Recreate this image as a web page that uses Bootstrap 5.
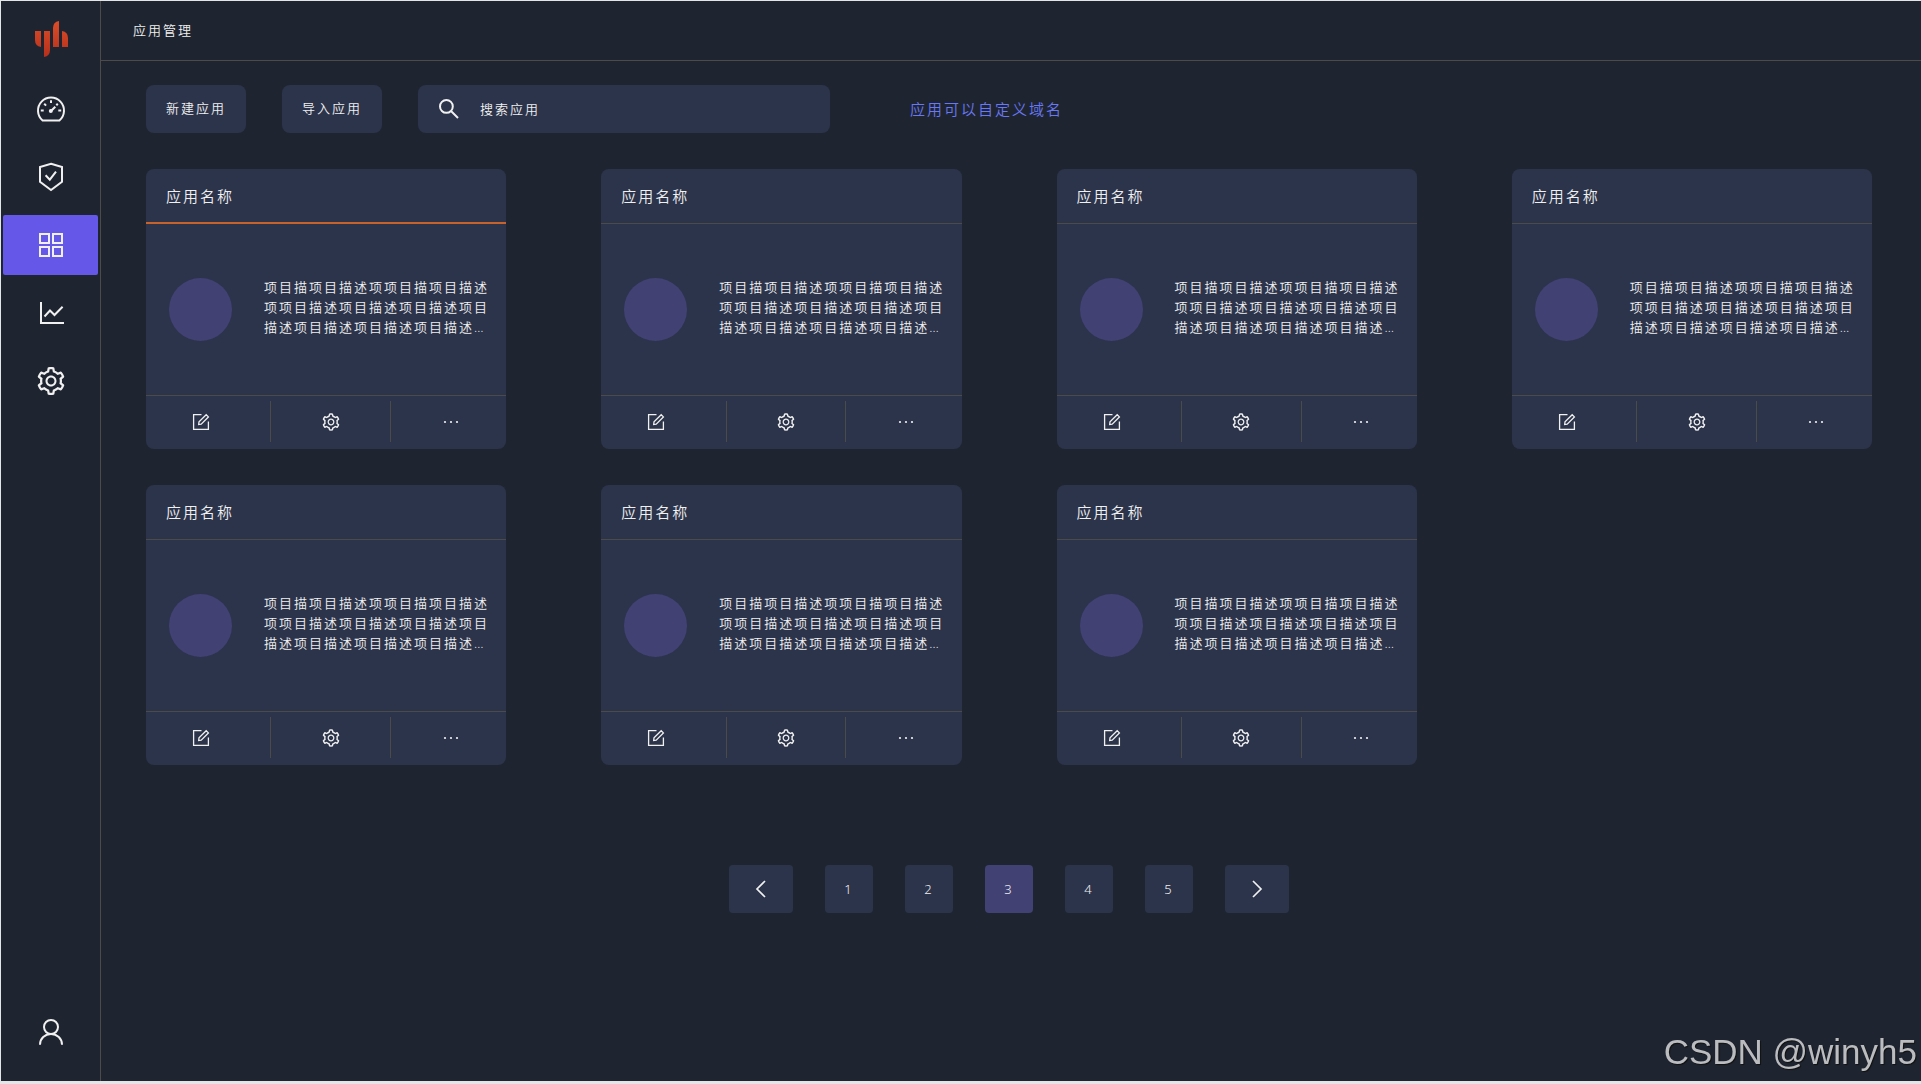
<!DOCTYPE html>
<html lang="zh-CN">
<head>
<meta charset="utf-8">
<meta name="viewport" content="width=device-width, initial-scale=1">
<title>应用管理</title>
<link href="https://cdn.jsdelivr.net/npm/bootstrap@5.3.0/dist/css/bootstrap.min.css" rel="stylesheet">
<style>
:root { --ink: #1f2530; --panel: #2c344b; --line: #4c4b4a; --violet: #6558e8; --plum: #414174; --snow: #f0f0f0; --weight: 350; }
body { background: var(--ink); color: var(--snow); font-family: "Noto Sans", "Noto Sans CJK SC", sans-serif; font-size: 13px; font-weight: var(--weight); line-height: 20px; letter-spacing: 2px; }
.shell { min-height: 100vh; border: solid #e3e5e6; border-width: 1px 0 3px 1px; }
.side { flex: 0 0 100px; border-right: 1px solid var(--line); padding: 20px 2px 19px; }
.side-nav { gap: 8px; margin-top: 22px; }
.side-link { height: 60px; border-radius: 2px; color: var(--snow); }
.side-link.active { background: var(--violet); }
.stroked { fill: none; stroke: currentColor; stroke-width: 2; }
.topbar { height: 60px; border-bottom: 1px solid var(--line); padding: 0 32px 2px; }
.topbar h1 { font-size: 13px; line-height: 20px; font-weight: var(--weight); }
.work { padding: 24px 49px 48px 45px; }
.tools { gap: 36px; margin-bottom: 36px; }
.tool-btn { --bs-btn-color: var(--snow); --bs-btn-bg: var(--panel); --bs-btn-hover-color: #fff; --bs-btn-hover-bg: var(--plum); --bs-btn-font-weight: var(--weight); height: 48px; padding: 0 20px; border: 0; border-radius: 8px; font-size: 13px; letter-spacing: 2px; }
.finder { flex: 0 1 412px; height: 48px; padding: 0 20px; gap: 20px; border-radius: 8px; background: var(--panel); }
.finder input, .finder input:focus { background: transparent; color: var(--snow); border: 0; padding: 0; box-shadow: none; font-size: 13px; font-weight: var(--weight); line-height: 20px; letter-spacing: 2px; }
.finder input::placeholder { color: var(--snow); opacity: 1; }
.tip { margin-left: 44px; font-size: 15px; color: #6878f6; }
.apps { --bs-gutter-x: 95px; --bs-gutter-y: 36px; }
.app-card { --bs-card-bg: var(--panel); --bs-card-color: var(--snow); --bs-card-border-width: 0; --bs-card-border-radius: 8px; --bs-card-inner-border-radius: 8px; height: 280px; }
.app-head { height: 55px; padding: 0 20px; border-bottom: 1px solid var(--line); }
.app-head h2 { font-size: 15px; line-height: 20px; font-weight: var(--weight); }
.app-head.current { border-bottom: 2px solid #c8622c; }
.app-body { padding: 0 13px 0 23px; gap: 32px; }
.app-body p { padding-bottom: 5px; }
.dot { flex: 0 0 63px; height: 63px; border-radius: 50%; background: var(--plum); }
.app-foot { height: 54px; border-top: 1px solid var(--line); padding: 5px 0 7px; }
.act { color: var(--snow); background: none; border: 0; padding: 0; border-radius: 0; width: 33.3%; }
.act:first-child { width: 34.5%; padding-right: 14px; }
.act:last-child { width: 32.2%; padding-left: 4px; }
.act + .act { border-left: 1px solid var(--line); }
.pages { gap: 32px; margin: 100px 0 0; }
.pages .page-item .page-link { width: 48px; height: 48px; padding: 0; border: 0; border-radius: 4px; margin: 0; background: var(--panel); color: var(--snow); font-size: 13px; display: flex; align-items: center; justify-content: center; }
.pages .page-item .page-link.step { width: 64px; }
.pages .step svg { stroke-width: 1.7; }
.pages .page-item.active .page-link { background: var(--plum); }
.stamp { position: fixed; right: 4px; bottom: 12px; font: 35px/40px "Liberation Sans", sans-serif; letter-spacing: 0; color: #babcbf; text-shadow: 1px 1px 1px #111; }
</style>
</head>
<body>
<svg width="0" height="0" class="position-absolute" aria-hidden="true">
  <symbol id="gear" viewBox="0 0 1024 1024"><path fill="currentColor" d="M924.8 625.7l-65.5-56c3.1-19 4.7-38.4 4.7-57.8s-1.6-38.8-4.7-57.8l65.5-56a32.03 32.03 0 009.3-35.2l-.9-2.6a443.74 443.74 0 00-79.7-137.9l-1.8-2.1a32.12 32.12 0 00-35.1-9.5l-81.3 28.9c-30-24.6-63.5-44-99.7-57.6l-15.7-85a32.05 32.05 0 00-25.8-25.7l-2.7-.5c-52.1-9.4-106.9-9.4-159 0l-2.7.5a32.05 32.05 0 00-25.8 25.7l-15.8 85.4a351.86 351.86 0 00-99 57.4l-81.9-29.1a32 32 0 00-35.1 9.5l-1.8 2.1a446.02 446.02 0 00-79.7 137.9l-.9 2.6c-4.5 12.5-.8 26.5 9.3 35.2l66.3 56.6c-3.1 18.8-4.6 38-4.6 57.1 0 19.2 1.5 38.4 4.6 57.1L99 625.5a32.03 32.03 0 00-9.3 35.2l.9 2.6c18.1 50.4 44.9 96.9 79.7 137.9l1.8 2.1a32.12 32.12 0 0035.1 9.5l81.9-29.1c29.8 24.5 63.1 43.9 99 57.4l15.8 85.4a32.05 32.05 0 0025.8 25.7l2.7.5a449.4 449.4 0 00159 0l2.7-.5a32.05 32.05 0 0025.8-25.7l15.7-85a350 350 0 0099.7-57.6l81.3 28.9a32 32 0 0035.1-9.5l1.8-2.1c34.8-41.1 61.6-87.5 79.7-137.9l.9-2.6c4.5-12.3.8-26.3-9.3-35zM788.3 465.9c2.5 15.1 3.8 30.6 3.8 46.1s-1.3 31-3.8 46.1l-6.6 40.1 74.7 63.9a370.03 370.03 0 01-42.6 73.6L721 702.8l-31.4 25.8c-23.9 19.6-50.5 35-79.3 45.8l-38.1 14.3-17.9 97a377.5 377.5 0 01-85 0l-17.9-97.2-37.8-14.5c-28.5-10.8-55-26.2-78.7-45.7l-31.4-25.9-93.4 33.2c-17-22.9-31.2-47.6-42.6-73.6l75.5-64.5-6.5-40c-2.4-14.9-3.7-30.3-3.7-45.5 0-15.3 1.2-30.6 3.7-45.5l6.5-40-75.5-64.5c11.3-26.1 25.6-50.7 42.6-73.6l93.4 33.2 31.4-25.9c23.7-19.5 50.2-34.9 78.7-45.7l37.9-14.3 17.9-97.2c28.1-3.2 56.8-3.2 85 0l17.9 97 38.1 14.3c28.7 10.8 55.4 26.2 79.3 45.8l31.4 25.8 92.8-32.9c17 22.9 31.2 47.6 42.6 73.6L781.8 426l6.5 39.9zM512 336c-97.2 0-176 78.8-176 176s78.8 176 176 176 176-78.8 176-176-78.8-176-176-176zm79.2 255.2A111.6 111.6 0 01512 624c-29.9 0-58-11.7-79.2-32.8A111.6 111.6 0 01400 512c0-29.9 11.7-58 32.8-79.2C454 411.6 482.1 400 512 400c29.9 0 58 11.6 79.2 32.8A111.6 111.6 0 01624 512c0 29.9-11.7 58-32.8 79.2z"/></symbol>
  <symbol id="edit" viewBox="0 0 20 20"><path fill="none" stroke="currentColor" stroke-width="1.3" d="M10.5 2.6H2.6V17.4H17.4V9.5M7.7 12.4L8 9.9L15.2 2.7L17.4 4.9L10.2 12.1Z"/></symbol>
  <symbol id="more" viewBox="0 0 20 20"><g fill="currentColor"><circle cx="4" cy="10" r="1.1"/><circle cx="10" cy="10" r="1.1"/><circle cx="16" cy="10" r="1.1"/></g></symbol>
</svg>

<div class="shell d-flex">
  <aside class="side d-flex flex-column">
    <a href="#" class="d-flex justify-content-center" aria-label="主页">
      <svg width="36" height="36" viewBox="-2 0 36 36"><defs><linearGradient id="ember" x1="0" y1="0" x2="0" y2="36" gradientUnits="userSpaceOnUse"><stop offset="0" stop-color="#dc4d29"/><stop offset="1" stop-color="#b5301c"/></linearGradient></defs>
      <path fill="url(#ember)" d="M0 10H6V26Q0 25 0 19ZM9 10H15V29Q15 35 9 36ZM18 26V7Q18 1 24 0V26ZM27 10Q33 11 33 17V26H27Z"/></svg>
    </a>
    <nav class="side-nav nav flex-column flex-grow-1">
      <a href="#" class="side-link d-flex align-items-center justify-content-center" aria-label="仪表盘">
        <svg class="stroked" width="32" height="32" viewBox="0 0 32 32"><path d="M7.6 27.5A13 13 0 1 1 24.4 27.5Z"/><path d="M16 7.2V10M5.8 17.5H8.7M23.3 17.5H26.2M9.2 10.7L11.1 12.6M21.3 12.2L22.8 10.7"/><path d="M16 18L20.3 13.7"/><circle cx="15.8" cy="18" r="1" /></svg></a>
      <a href="#" class="side-link d-flex align-items-center justify-content-center" aria-label="安全">
        <svg class="stroked" width="32" height="32" viewBox="0 0 32 32"><path d="M16 2.8L27 6V20.8L16 29L5 20.8V6Z"/><path d="M10.6 14.2L14.8 18.7L21 10.6"/></svg></a>
      <a href="#" class="side-link active d-flex align-items-center justify-content-center" aria-label="应用" aria-current="page">
        <svg class="stroked" width="32" height="32" viewBox="0 0 32 32"><path d="M5 5H14V14H5ZM18 5H27V14H18ZM5 18H14V27H5ZM18 18H27V27H18Z"/></svg></a>
      <a href="#" class="side-link d-flex align-items-center justify-content-center" aria-label="统计">
        <svg class="stroked" width="32" height="32" viewBox="0 0 32 32"><path d="M6 5V26H29M9.5 19.5L15 13.5L19.5 18L27.6 9.8"/></svg></a>
      <a href="#" class="side-link d-flex align-items-center justify-content-center" aria-label="设置">
        <svg width="32" height="32"><use href="#gear"/></svg></a>
    </nav>
    <a href="#" class="side-link d-flex align-items-center justify-content-center" aria-label="用户">
      <svg class="stroked" width="32" height="32" viewBox="0 0 32 32"><circle cx="16" cy="11" r="7"/><path d="M5 28.8V28.5A11 10.5 0 0 1 27 28.5V28.8"/></svg></a>
  </aside>

  <div class="flex-grow-1">
    <header class="topbar d-flex align-items-center"><h1 class="m-0">应用管理</h1></header>
    <main class="work">
      <div class="tools d-flex align-items-center">
        <button type="button" class="btn tool-btn">新建应用</button>
        <button type="button" class="btn tool-btn">导入应用</button>
        <div class="finder d-flex align-items-center" role="search">
          <label for="q" class="d-flex" aria-label="搜索应用">
            <svg class="stroked" width="22" height="22" viewBox="0 0 22 22"><circle cx="8.4" cy="8.4" r="6.4"/><path d="M13 13L20 20"/></svg></label>
          <input id="q" type="text" class="form-control" placeholder="搜索应用">
        </div>
        <a href="#" class="tip text-decoration-none">应用可以自定义域名</a>
      </div>

      <div class="apps row row-cols-1 row-cols-md-2 row-cols-xl-4" id="apps"></div>

      <nav aria-label="分页">
        <ul class="pages pagination justify-content-center">
          <li class="page-item"><a class="page-link step" href="#" aria-label="上一页"><svg class="stroked" width="20" height="20" viewBox="0 0 20 20"><path d="M14 2L6 10L14 18"/></svg></a></li>
          <li class="page-item"><a class="page-link" href="#">1</a></li>
          <li class="page-item"><a class="page-link" href="#">2</a></li>
          <li class="page-item active" aria-current="page"><a class="page-link" href="#">3</a></li>
          <li class="page-item"><a class="page-link" href="#">4</a></li>
          <li class="page-item"><a class="page-link" href="#">5</a></li>
          <li class="page-item"><a class="page-link step" href="#" aria-label="下一页"><svg class="stroked" width="20" height="20" viewBox="0 0 20 20"><path d="M6 2L14 10L6 18"/></svg></a></li>
        </ul>
      </nav>
    </main>
  </div>
</div>
<div class="stamp">CSDN @winyh5</div>

<template id="app-tpl">
  <div class="col">
    <article class="card app-card">
      <div class="app-head d-flex align-items-center"><h2 class="m-0">应用名称</h2></div>
      <div class="app-body d-flex align-items-center flex-grow-1">
        <span class="dot"></span>
        <p class="m-0">项目描项目描述项项目描项目描述项项目描述项目描述项目描述项目描述项目描述项目描述项目描述…</p>
      </div>
      <div class="app-foot d-flex">
        <button type="button" class="btn act d-flex align-items-center justify-content-center" aria-label="编辑"><svg width="20" height="20"><use href="#edit"/></svg></button>
        <button type="button" class="btn act d-flex align-items-center justify-content-center" aria-label="设置"><svg width="20" height="20"><use href="#gear"/></svg></button>
        <button type="button" class="btn act d-flex align-items-center justify-content-center" aria-label="更多"><svg width="20" height="20"><use href="#more"/></svg></button>
      </div>
    </article>
  </div>
</template>
<script src="https://cdn.jsdelivr.net/npm/bootstrap@5.3.0/dist/js/bootstrap.bundle.min.js"></script>
<script>
const list = document.getElementById('apps');
const tpl = document.getElementById('app-tpl');
for (let i = 0; i < 7; i++) list.append(tpl.content.cloneNode(true));
list.querySelector('.app-head').classList.add('current');
</script>
</body>
</html>
